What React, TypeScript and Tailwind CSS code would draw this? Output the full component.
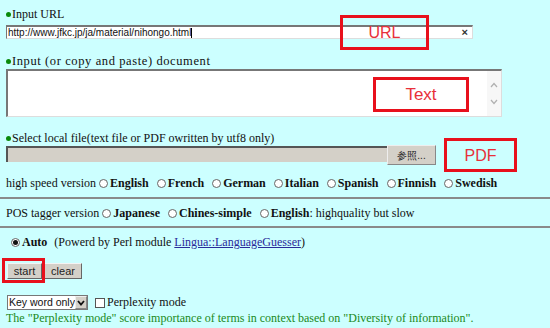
import React from 'react'

const serif = "font-['Liberation_Serif','Times_New_Roman',serif]"
const sans = "font-['Liberation_Sans',Arial,sans-serif]"

function Dot() {
  return <span className="inline-block w-[5px] h-[5px] rounded-full bg-[#0a8a0a] mr-[1px] align-middle mb-[2px]" />
}

function Radio({ checked = false }: { checked?: boolean }) {
  return (
    <span className="inline-flex items-center justify-center w-[9px] h-[9px] rounded-full border border-[#666] bg-white mr-[2px] align-middle mb-[2px]">
      {checked && <span className="w-[5px] h-[5px] rounded-full bg-[#111]" />}
    </span>
  )
}

function Note({ label, className }: { label: string; className: string }) {
  return (
    <div
      className={`absolute border-[3px] border-[#e8101c] flex items-center justify-center text-[#e8303a] ${sans} ${className}`}
    >
      {label}
    </div>
  )
}

function Option({ label }: { label: string }) {
  return (
    <span className="ml-[8px] whitespace-nowrap">
      <Radio />
      <b>{label}</b>
    </span>
  )
}

const fast = ['English', 'French', 'German', 'Italian', 'Spanish', 'Finnish', 'Swedish']

const hr = 'border-t-2 border-[#8a8a8a]'
const btn = 'h-[16px] bg-[#d4d0c8] border border-[#666] border-t-[#f4f4f4] border-l-[#f4f4f4] flex items-center justify-center'

export default function App() {
  return (
    <div className={`relative w-[550px] h-[328px] bg-[#ccffff] overflow-hidden text-[12px] leading-[15px] text-[#111] ${serif}`}>
      <div className="pt-[7px]">
        <div className="pl-[6px] h-[15px]">
          <Dot />Input URL
        </div>
        <div className={`ml-[6px] mt-[3px] w-[467px] h-[14px] bg-white border-t-2 border-l border-[#777] border-b border-b-[#ddd] border-r border-r-[#ddd] flex items-center justify-between pl-[1px] pr-[4px] text-[10px] ${sans}`}>
          <span className="whitespace-nowrap">
            http://www.jfkc.jp/ja/material/nihongo.html<span className="inline-block w-px h-[10px] bg-black align-middle" />
          </span>
          <span className="text-[11px] font-bold text-[#333]">×</span>
        </div>

        <div className="pl-[6px] mt-[15px] h-[15px] text-[12.5px] tracking-[0.6px] whitespace-nowrap">
          <Dot />Input (or copy and paste) document
        </div>
        <div className="ml-[6px] w-[496px] h-[48px] bg-white border-t-2 border-l-2 border-[#777] border-b border-b-[#ddd] border-r border-r-[#ddd] flex justify-end">
          <div className="w-[14px] bg-[#f7f7f7] flex flex-col items-center">
            <svg width="8" height="6" viewBox="0 0 8 6" className="mt-[11px]">
              <path d="M1 5 L4 1.5 L7 5" fill="none" stroke="#b0b0b0" strokeWidth="1.2" />
            </svg>
            <svg width="8" height="6" viewBox="0 0 8 6" className="mt-[11px]">
              <path d="M1 1 L4 4.5 L7 1" fill="none" stroke="#b0b0b0" strokeWidth="1.2" />
            </svg>
          </div>
        </div>

        <div className="pl-[6px] mt-[14px] h-[15px] whitespace-nowrap">
          <Dot />Select local file(text file or PDF owritten by utf8 only)
        </div>
        <div className="flex items-start ml-[6px] mt-[-1px] h-[20px]">
          <div className="w-[381px] h-[16px] mt-[1px] bg-[#d4d0c8] border-t-2 border-l-2 border-[#555]" />
          <div className={`w-[49px] h-[20px] bg-[#d4d0c8] border border-[#888] border-t-[#eee] border-l-[#eee] flex items-center justify-center text-[10px] text-[#222] ${sans}`}>
            参照...
          </div>
        </div>

        <div className="pl-[6px] mt-[11px] h-[15px] whitespace-nowrap">
          <span className="mr-[-5px]">high speed version</span>
          {fast.map(l => (
            <Option key={l} label={l} />
          ))}
        </div>
        <div className={`mt-[6px] ${hr}`} />

        <div className="pl-[6px] mt-[7px] h-[15px] whitespace-nowrap">
          <span className="mr-[-5px]">POS tagger version</span>
          <Option label="Japanese" />
          <Option label="Chines-simple" />
          <span className="ml-[8px]">
            <Radio />
            <b>English</b>: highquality but slow
          </span>
        </div>
        <div className={`mt-[5px] ${hr}`} />

        <div className="pl-[11px] mt-[7px] h-[15px] whitespace-nowrap">
          <Radio checked />
          <b>Auto</b>
          <span className="ml-[7px]">
            (Powerd by Perl module <span className="text-[#2a2a9a] underline">Lingua::LanguageGuesser</span>)
          </span>
        </div>

        <div className={`flex gap-[2px] ml-[7px] mt-[13px] text-[11px] text-[#222] ${sans}`}>
          <div className={`w-[35px] ${btn}`}>start</div>
          <div className={`w-[38px] ${btn}`}>clear</div>
        </div>

        <div className="flex items-center ml-[7px] mt-[16px] h-[15px]">
          <div className={`w-[81px] h-[15px] bg-white border border-[#777] flex items-center justify-between text-[10.5px] whitespace-nowrap ${sans}`}>
            <span className="pl-[1px]">Key word only</span>
            <span className="w-[14px] h-[13px] bg-[#d4d0c8] border border-[#888] border-t-[#eee] border-l-[#eee] flex items-center justify-center">
              <svg width="8" height="6" viewBox="0 0 8 6">
                <path d="M1 1 L4 4.5 L7 1" fill="none" stroke="#111" strokeWidth="1.8" />
              </svg>
            </span>
          </div>
          <span className="ml-[7px] w-[10px] h-[10px] bg-white border border-[#555]" />
          <span className="ml-[2px]">Perplexity mode</span>
        </div>
        <div className="pl-[6px] mt-[1px] text-[#1a8a1a] whitespace-nowrap">
          The "Perplexity mode" score importance of terms in context based on "Diversity of information".
        </div>
      </div>

      <Note label="URL" className="left-[340px] top-[15px] w-[89px] h-[35px] text-[16px]" />
      <Note label="Text" className="left-[373px] top-[77px] w-[96px] h-[35px] text-[17px]" />
      <Note label="PDF" className="left-[444px] top-[138px] w-[73px] h-[34px] text-[16px]" />
      <div className="absolute left-[2px] top-[258px] w-[43px] h-[25px] border-[3px] border-[#e8101c]" />
    </div>
  )
}
